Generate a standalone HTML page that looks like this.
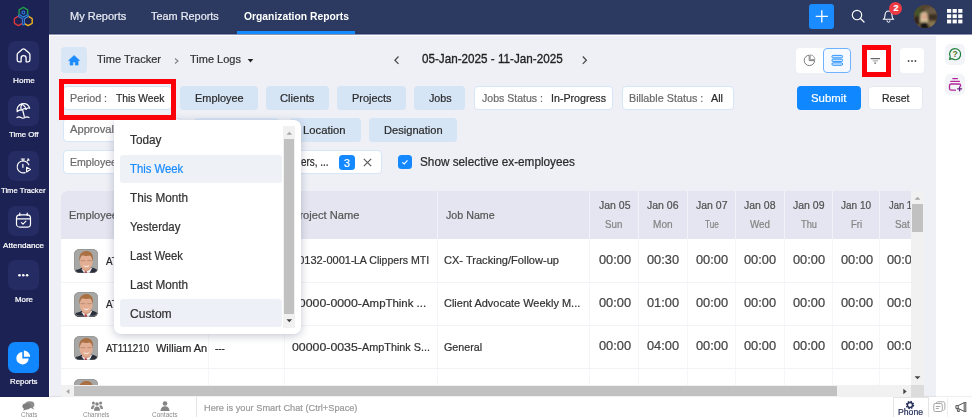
<!DOCTYPE html>
<html lang="en"><head>
<meta charset="utf-8">
<title>Organization Reports - Time Logs</title>
<style>
*{box-sizing:border-box;margin:0;padding:0}
html,body{width:972px;height:417px;overflow:hidden;background:#eef0f6}
body{font-family:"Liberation Sans",sans-serif;font-size:12px;color:#222;position:relative}
.abs{position:absolute}
.fx{position:absolute;white-space:nowrap;line-height:1;transform-origin:0 50%;display:block;-webkit-text-stroke:.22px currentColor}
#side{position:absolute;left:0;top:0;width:49px;height:397px;background:#1c2254}
.sb{position:absolute;left:8px;width:31px;height:30px;border-radius:7px;background:#252b63}
.sb svg{position:absolute;left:0;top:0}
#top{position:absolute;left:49px;top:0;width:923px;height:34px;background:#2c3961}
#rail{position:absolute;left:936.200px;top:35px;width:35.800px;height:363px;background:#fff}
.rb{position:absolute;left:8.600px;width:20px;height:21px;border-radius:5px;background:#f3f4f7}
#bot{position:absolute;left:0;top:396.700px;width:972px;height:20.300px;background:#fff;box-shadow:0 -1px 1px rgba(0,0,0,.06)}
.chip{position:absolute;height:24px;border-radius:3.500px;background:#d6e5f6}
.fld{position:absolute;height:24.400px;border-radius:4px;background:#fff;border:1px solid #d6e6f9}
#tbl{position:absolute;left:61px;top:191px;width:850px;height:194px;background:#fff;border-top-left-radius:6px;overflow:hidden}
#th{position:absolute;left:0;top:0;width:850px;height:48px;background:#e5e5f1}
.vs{position:absolute;top:0;width:1px;height:48px;background:#f1f2f8}
.vr{position:absolute;top:48px;width:1px;height:150px;background:#f5f6f9}
.hr{position:absolute;left:0;width:850px;height:1px;background:#f2f3f6}
.av{position:absolute;left:12.500px;width:24.500px;height:24.500px;border-radius:5.500px;overflow:hidden;background:#a4a4a3}
#dd{position:absolute;left:114px;top:119.5px;width:187px;height:214px;background:#fff;border-radius:0 7px 7px 7px;box-shadow:0 2px 9px rgba(40,50,90,.27)}
.it{position:absolute;left:6.300px;width:161.800px;height:28px;border-radius:3px;background:#eef0f7}
</style>
</head>
<body>

<!-- ============ top bar ============ -->
<div id="top">
  <div class="abs" style="left:0;top:33px;width:923px;height:1px;background:#27315e"></div>
  <div class="abs" style="left:188.200px;top:31.300px;width:117.600px;height:2.900px;background:#148aff"></div>
  <div class="abs" style="left:760px;top:4px;width:25px;height:25px;border-radius:3px;background:#1a8cff">
    <svg width="25" height="25" viewBox="0 0 25 25"><path d="M12.800 6.200v12.200M6.700 12.300h12.200" stroke="#fff" stroke-width="1.300" fill="none"></path></svg>
  </div>
  <svg class="abs" style="left:799px;top:6px" width="20" height="20" viewBox="0 0 20 20"><circle cx="9" cy="9" r="4.700" fill="none" stroke="#fff" stroke-width="1.150"></circle><path d="M12.500 12.500l3.500 3.500" stroke="#fff" stroke-width="1.300" stroke-linecap="round"></path></svg>
  <svg class="abs" style="left:830px;top:7px" width="20" height="20" viewBox="0 0 20 20"><path d="M4.300 12.200c1.200-.7 1.700-1.900 1.700-3.700 0-2.700 1.500-4.500 3.500-4.500s3.500 1.800 3.500 4.500c0 1.800.5 3 1.700 3.700z" fill="none" stroke="#fff" stroke-width="1.100" stroke-linejoin="round"></path><path d="M8.100 13.300v.6a1.400 1.400 0 0 0 2.800 0v-.6" fill="none" stroke="#fff" stroke-width="1"></path></svg>
  <div class="abs" style="left:840.200px;top:2.300px;width:12.500px;height:12.500px;border-radius:7px;background:#ee3a43"></div>
  <span class="fx" style="left:844.400px;top:4.300px;font-size:9px;color:#fff;font-weight:bold">2</span>
  <div class="abs" style="left:864.500px;top:4.500px;width:23.600px;height:23.600px;border-radius:12px;overflow:hidden;background:#4e4231">
    <svg width="24" height="24" viewBox="0 0 24 24" style="display:block"><g filter="url(#ab)"><rect x="-2" y="-2" width="28" height="28" fill="#54452f"></rect><ellipse cx="4" cy="7" rx="4" ry="5" fill="#465229"></ellipse><ellipse cx="17" cy="6" rx="7" ry="3.500" fill="#6b5a44"></ellipse><ellipse cx="19" cy="12" rx="5" ry="3" fill="#3a2e24"></ellipse><ellipse cx="18" cy="19" rx="6" ry="3" fill="#86764f"></ellipse><ellipse cx="3" cy="16" rx="3.500" ry="5" fill="#30281e"></ellipse><ellipse cx="5" cy="22" rx="4" ry="2.500" fill="#7a6c45"></ellipse><path d="M6.500 10.500c0-5 7-5 7 0l.6 7h-8z" fill="#d6c198"></path><ellipse cx="10.400" cy="11.600" rx="2.300" ry="2.800" fill="#dba48c"></ellipse><path d="M6 24c-.5-5 2-7 4.500-7s4.500 2 4 7z" fill="#141416"></path><ellipse cx="8.500" cy="6.300" rx="2.500" ry="1" fill="#2c241c"></ellipse></g></svg>
  </div>
  <svg class="abs" style="left:898.300px;top:9.200px" width="16" height="15" viewBox="0 0 16 15" fill="#fff"><rect x="0" y="0" width="4.200" height="3.800"></rect><rect x="5.600" y="0" width="4.200" height="3.800"></rect><rect x="11.200" y="0" width="4.200" height="3.800"></rect><rect x="0" y="5.300" width="4.200" height="3.800"></rect><rect x="5.600" y="5.300" width="4.200" height="3.800"></rect><rect x="11.200" y="5.300" width="4.200" height="3.800"></rect><rect x="0" y="10.600" width="4.200" height="3.800"></rect><rect x="5.600" y="10.600" width="4.200" height="3.800"></rect><rect x="11.200" y="10.600" width="4.200" height="3.800"></rect></svg>
</div>
<span class="fx" style="left: 70.4px; top: 9.9px; font-size: 11.62px; color: rgb(232, 235, 244); transform: scaleX(0.948);">My Reports</span>
<span class="fx" style="left: 151px; top: 9.9px; font-size: 11.62px; color: rgb(232, 235, 244); transform: scaleX(0.938);">Team Reports</span>
<span class="fx" style="left: 243.5px; top: 9.9px; font-size: 11.62px; color: rgb(255, 255, 255); font-weight: bold; -webkit-text-stroke-width: 0px; transform: scaleX(0.889);">Organization Reports</span>

<!-- ============ sidebar ============ -->
<div id="side">
  <svg class="abs" style="left:11px;top:4.800px" width="25" height="25" viewBox="0 0 25 25" fill="none" stroke-width="1.400" stroke-linejoin="round">
    <path d="M12.40 2.43L16.70 4.92L16.70 9.88L12.40 12.37L8.10 9.88L8.10 4.92z" stroke="#1f9d48"></path>
    <path d="M7.50 11.17L11.60 13.53L11.60 18.27L7.50 20.63L3.40 18.27L3.40 13.53z" stroke="#de3636"></path>
    <path d="M17.10 11.17L21.20 13.53L21.20 18.27L17.10 20.63L13.00 18.27L13.00 13.53z" stroke="#efb21d"></path>
    <path d="M8.400 10.800l4 2.500 4-2.500M12.400 13.300v5.600" stroke="#2b7fe2" stroke-width="3" stroke-linecap="round"></path>
    <path d="M8.400 10.800l4 2.500 4-2.500M12.400 13.300v5.600" stroke="#1f2a63" stroke-width=".9" stroke-linecap="round"></path>
    <circle cx="12.400" cy="7.500" r="1.500" stroke="#2b7fe2" stroke-width="1.100"></circle>
  </svg>
  <div class="sb" style="top:41px"><svg width="31" height="30" viewBox="0 0 31 30" fill="none" stroke="#fff" stroke-width="1.300" stroke-linejoin="round" stroke-linecap="round"><path d="M9.200 13.600c0-.7.300-1.200.8-1.600l4.400-3.700c.7-.6 1.600-.6 2.300 0l4.400 3.700c.5.400.8.900.8 1.600v5.400c0 1-.8 1.800-1.800 1.800h-2v-3.600c0-1.400-1.100-2.500-2.500-2.500s-2.500 1.100-2.500 2.500v3.600h-2.100c-1 0-1.800-.8-1.800-1.800z"></path></svg></div>
  <div class="sb" style="top:95.500px"><svg width="31" height="30" viewBox="0 0 31 30" fill="none" stroke="#fff" stroke-width="1.200" stroke-linejoin="round" stroke-linecap="round"><path d="M9.200 15.700c-1-3.600 1.300-7 4.700-7.800 3.500-.8 6.600 1 7.800 4.300-1.400-.4-2.800 0-3.500 1-1.300-.7-3-.4-4 .8-1.600-.4-3.600.2-5 1.700z"></path><path d="M13.900 7.900c-1 1.800-1.300 3.900-.7 6.100M13.900 7.900c1.900 1.100 3.400 2.900 4.300 5.300M14.800 14.500l1.500 6"></path><path d="M9 21.500c1.400-.9 2.600-.9 4 0s2.600.9 4 0 2.600-.9 4 0"></path></svg></div>
  <div class="sb" style="top:150.500px"><svg width="31" height="30" viewBox="0 0 31 30" fill="none" stroke="#fff" stroke-width="1.200" stroke-linejoin="round" stroke-linecap="round"><path d="M20.800 13.800a6 6 0 1 0-3.700 7.800"></path><path d="M13.300 8h3.200M14.900 8v1.800M19.300 9.800l1.300-1.300M19.900 8l1.200 1.200M14.900 13.300v3"></path><path d="M18.600 16.300l3.800 2.300-3.800 2.300z"></path></svg></div>
  <div class="sb" style="top:205.500px"><svg width="31" height="30" viewBox="0 0 31 30" fill="none" stroke="#fff" stroke-width="1.200" stroke-linejoin="round" stroke-linecap="round"><rect x="8.500" y="8.800" width="14" height="12.300" rx="3.200"></rect><path d="M8.500 12.800h14M11.800 7v2.400M19.200 7v2.400M13.400 16.600l1.600 1.500 2.900-2.900"></path></svg></div>
  <div class="sb" style="top:260px"><svg width="31" height="30" viewBox="0 0 31 30" fill="#fff"><circle cx="11.500" cy="15.300" r="1.300"></circle><circle cx="15.300" cy="15.300" r="1.300"></circle><circle cx="19.100" cy="15.300" r="1.300"></circle></svg></div>
  <div class="sb" style="top:342px;height:31px;background:#1087ff"><svg width="31" height="31" viewBox="0 0 31 31" fill="#fff"><path d="M14.300 10a6.200 6.200 0 1 0 6.400 6.400h-6.400z"></path><path d="M15.900 8.600a6.200 6.200 0 0 1 6.200 6.200h-6.200z"></path></svg></div>
</div>
<span class="fx" style="left: 12.8px; top: 76.6px; font-size: 7.91px; color: rgb(255, 255, 255); transform: scaleX(1.029);">Home</span>
<span class="fx" style="left: 8.9px; top: 131px; font-size: 7.91px; color: rgb(255, 255, 255); transform: scaleX(0.987);">Time Off</span>
<span class="fx" style="left: 1.2px; top: 186.8px; font-size: 7.91px; color: rgb(255, 255, 255); transform: scaleX(0.971);">Time Tracker</span>
<span class="fx" style="left: 3px; top: 241.5px; font-size: 7.91px; color: rgb(255, 255, 255); transform: scaleX(1.025);">Attendance</span>
<span class="fx" style="left: 14.5px; top: 296.1px; font-size: 7.91px; color: rgb(255, 255, 255); transform: scaleX(0.999);">More</span>
<span class="fx" style="left: 9.7px; top: 378.1px; font-size: 7.91px; color: rgb(255, 255, 255); transform: scaleX(0.993);">Reports</span>

<!-- ============ right rail ============ -->
<div id="rail">
  <div class="rb" style="top:9px"><svg width="20" height="21" viewBox="0 0 20 21" fill="none" stroke="#1d7f3b" stroke-width="1.200"><path d="M10.200 4.700a5.500 5.500 0 1 1-3.300 9.900l-2.400.7.800-2.300a5.500 5.500 0 0 1 4.900-8.300z" stroke-linejoin="round"></path><text x="10.200" y="13.100" font-family="Liberation Sans, sans-serif" font-size="8.500" font-weight="bold" text-anchor="middle" fill="#4f7a24" stroke="none">?</text></svg></div>
  <div class="rb" style="top:39px"><svg width="20" height="21" viewBox="0 0 20 21" fill="none" stroke="#b3259a" stroke-width="1.300" stroke-linecap="round"><path d="M7.800 4.600h4.600M5.800 7.400h8.600M10.500 16.200h-4.200a1.800 1.800 0 0 1-1.800-1.800v-2.600a1.800 1.800 0 0 1 1.800-1.800h7.600a1.800 1.800 0 0 1 1.800 1.800v.4"></path><path d="M14.600 12.800v4M12.600 14.800h4" stroke="#6d1f86"></path></svg></div>
</div>

<!-- ============ bottom bar ============ -->
<div id="bot">
  <svg class="abs" style="left:22px;top:4px" width="13" height="10" viewBox="0 0 13 10" fill="#8d8d8d"><ellipse cx="7.800" cy="3.700" rx="4.600" ry="3.400"></ellipse><path d="M10.500 5.500l1.700 3-3.800-1.800z"></path><ellipse cx="4.600" cy="5.300" rx="4.200" ry="3.100" fill="#7e7e7e"></ellipse><path d="M2.200 7.200l-1 2.600 3.500-1.500z" fill="#7e7e7e"></path></svg>
  <svg class="abs" style="left:91px;top:4px" width="12" height="10" viewBox="0 0 12 10" fill="#858585"><circle cx="6" cy="3" r="1.800"></circle><path d="M3 9.800c0-2.800 1.200-4.300 3-4.300s3 1.500 3 4.300z"></path><circle cx="2.400" cy="2" r="1.500"></circle><path d="M0 8c0-2.400 1-3.800 2.400-3.800.6 0 1.100.2 1.500.6-.9.800-1.400 2-1.500 3.200z"></path><circle cx="9.600" cy="2" r="1.500"></circle><path d="M12 8c0-2.400-1-3.800-2.400-3.800-.6 0-1.100.2-1.500.6.900.8 1.400 2 1.500 3.200z"></path></svg>
  <svg class="abs" style="left:160px;top:4px" width="10" height="10" viewBox="0 0 10 10" fill="#858585"><circle cx="5" cy="2.500" r="2.300"></circle><path d="M.5 10c0-3.300 1.800-4.800 4.500-4.800s4.500 1.500 4.500 4.800z"></path></svg>
  <div class="abs" style="left:196px;top:0;width:1px;height:20px;background:#e4e4e4"></div>
  <div class="abs" style="left:892.800px;top:0;width:35.800px;height:20px;border:1px solid #e4e4e4;border-bottom:none"></div>
  <div class="abs" style="left:947.200px;top:1px;width:1px;height:19px;background:#efefef"></div>
  <svg class="abs" style="left:905px;top:3px" width="10" height="10" viewBox="0 0 10 10"><circle cx="5" cy="5" r="3.400" fill="none" stroke="#27305a" stroke-width="1.600" stroke-dasharray="1.500 1.170"></circle><circle cx="5" cy="5" r="2.500" fill="none" stroke="#27305a" stroke-width="1.400"></circle></svg>
  <svg class="abs" style="left:933px;top:4px" width="13" height="12" viewBox="0 0 13 12" fill="none" stroke="#9c9c9c" stroke-width=".9"><rect x=".8" y="2.500" width="8.500" height="8" rx="1.500"></rect><path d="M3 2.500c.3-1.200 1-1.700 2-1.700h5.200c1 0 1.700.7 1.700 1.700v5c0 1-.6 1.600-1.600 1.800M2.800 5.500h4.500M2.800 7.500h3"></path></svg>
  <svg class="abs" style="left:954.500px;top:4.500px" width="13" height="13" viewBox="0 0 13 13" fill="none" stroke="#4a4a4a" stroke-width=".95" stroke-linejoin="round"><path d="M.9 4.600h2.300l6-3v8.800l-6-3h-2.300zM3.200 4.600v2.800M10.800 1v10M9.200 1.600c.8 0 1.600 0 1.600-.6M9.200 10.400c.8 0 1.600 0 1.600.6M2 7.600l.7 2.900h1.700l-.6-2.600"></path></svg>
</div>
<span class="fx" style="left: 20.6px; top: 411.1px; font-size: 7.63px; color: rgb(138, 138, 138); -webkit-text-stroke-width: 0px; transform: scaleX(0.823);">Chats</span>
<span class="fx" style="left: 83.3px; top: 411.1px; font-size: 7.63px; color: rgb(138, 138, 138); -webkit-text-stroke-width: 0px; transform: scaleX(0.819);">Channels</span>
<span class="fx" style="left: 151.9px; top: 411.1px; font-size: 7.63px; color: rgb(138, 138, 138); -webkit-text-stroke-width: 0px; transform: scaleX(0.847);">Contacts</span>
<span class="fx" style="left: 204px; top: 402.9px; font-size: 9.77px; color: rgb(154, 154, 154); transform: scaleX(0.944);">Here is your Smart Chat (Ctrl+Space)</span>
<span class="fx" style="left: 897.6px; top: 408px; font-size: 8.84px; color: rgb(39, 48, 90); transform: scaleX(0.979);">Phone</span>

<!-- content frame highlight -->
<div class="abs" style="left:49px;top:34px;width:923px;height:1px;background:#8e94b3"></div>
<div class="abs" style="left:49px;top:35px;width:887.200px;height:1px;background:#fdfdff"></div>
<div class="abs" style="left:49px;top:35px;width:1.400px;height:362px;background:#fbfcfe"></div>

<!-- ============ breadcrumb row ============ -->
<div class="abs" style="left:61.300px;top:46.800px;width:25.900px;height:26.700px;border-radius:4px;background:#d8e6f6">
  <svg width="26" height="26" viewBox="0 0 26 26"><path d="M13.100 8.500l-5.500 5h1.500v4.600h2.800v-3.100h2.400v3.100h2.800v-4.600h1.500z" fill="#1a8cff" stroke="#1a8cff" stroke-width=".6" stroke-linejoin="round"></path></svg>
</div>
<svg class="abs" style="left:172px;top:54.500px" width="8" height="11" viewBox="0 0 8 11"><path d="M3 3.500l3 2.500-3 2.500" fill="none" stroke="#808080" stroke-width="1.100"></path></svg>
<svg class="abs" style="left:245.500px;top:58px" width="9" height="6" viewBox="0 0 9 6"><path d="M1.700 1h5.600l-2.800 3.600z" fill="#222"></path></svg>
<svg class="abs" style="left:392px;top:54px" width="10" height="12" viewBox="0 0 10 12"><path d="M6.500 2.500l-3.600 3.700 3.600 3.700" fill="none" stroke="#4a4a4a" stroke-width="1.250"></path></svg>
<svg class="abs" style="left:580px;top:54px" width="10" height="12" viewBox="0 0 10 12"><path d="M2.800 2.500l3.600 3.700-3.600 3.700" fill="none" stroke="#4a4a4a" stroke-width="1.250"></path></svg>
<span class="fx" style="left: 97px; top: 53.4px; font-size: 11.62px; color: rgb(51, 51, 51); transform: scaleX(0.951);">Time Tracker</span>
<span class="fx" style="left: 190px; top: 53.4px; font-size: 11.62px; color: rgb(51, 51, 51); transform: scaleX(0.948);">Time Logs</span>
<span class="fx" style="left: 422px; top: 52.2px; font-size: 13.3px; color: rgb(34, 34, 34); -webkit-text-stroke-width: 0.35px; transform: scaleX(0.878);">05-Jan-2025 - 11-Jan-2025</span>

<!-- view toggle / filter / more -->
<div class="abs" style="left:795.500px;top:48.300px;width:55px;height:24.500px;border-radius:4px;background:#fff"></div>
<svg class="abs" style="left:802px;top:53px" width="15" height="15" viewBox="0 0 15 15" fill="none" stroke="#7a7a7a" stroke-width="1"><path d="M7.200 2.200a5.200 5.200 0 1 0 5.400 5.400h-5.400z"></path><path d="M8.300 1.900a4.700 4.700 0 0 1 4.600 4.600h-4.600z" stroke="#8a8a8a" stroke-width=".8"></path></svg>
<div class="abs" style="left:823px;top:48.300px;width:27.500px;height:24.500px;border-radius:4px;background:#f6faff;border:1px solid #6fb3ff"></div>
<svg class="abs" style="left:829px;top:53px" width="16" height="15" viewBox="0 0 16 15" fill="#cfe5ff" stroke="#1a8cff" stroke-width=".9"><rect x="2.900" y="2.400" width="10.700" height="2.500" rx="1.250"></rect><rect x="2.900" y="6.100" width="10.700" height="2.500" rx="1.250"></rect><rect x="2.900" y="9.800" width="10.700" height="2.500" rx="1.250"></rect></svg>
<div class="abs" style="left:862px;top:45px;width:29px;height:32px;background:#fff;border:5px solid #fb0008;border-left-width:5.500px;border-right-width:5.500px"></div>
<svg class="abs" style="left:869px;top:55px" width="15" height="12" viewBox="0 0 15 12" stroke-width="1" stroke-linecap="butt"><path d="M1.700 3.700h9.300" stroke="#444"></path><path d="M3.800 5.900h5.100" stroke="#9a9a9a"></path><path d="M5.300 8.100h1.800" stroke="#444"></path></svg>
<div class="abs" style="left:899.500px;top:48.300px;width:24.500px;height:24.500px;border-radius:4px;background:#fff"></div>
<svg class="abs" style="left:906px;top:59px" width="12" height="4" viewBox="0 0 12 4" fill="#444"><circle cx="2.600" cy="2" r=".9"></circle><circle cx="6" cy="2" r=".9"></circle><circle cx="9.400" cy="2" r=".9"></circle></svg>

<!-- ============ filter row 1 ============ -->
<div class="fld" style="left:63px;top:85.800px;width:109px;border-color:#cfe2f8"></div>
<div class="chip" style="left:180px;top:86px;width:77.500px"></div>
<div class="chip" style="left:266px;top:86px;width:62.500px"></div>
<div class="chip" style="left:337px;top:86px;width:68.500px"></div>
<div class="chip" style="left:414px;top:86px;width:51px"></div>
<div class="fld" style="left:473.500px;top:85.800px;width:139px"></div>
<div class="fld" style="left:621.500px;top:85.800px;width:112.500px"></div>
<div class="abs" style="left:796.700px;top:85.800px;width:64.300px;height:24.600px;border-radius:4px;background:#0f87ff"></div>
<div class="abs" style="left:868.400px;top:85.800px;width:55px;height:24.600px;border-radius:4px;background:#fff;border:1px solid #e6e9f0"></div>

<!-- ============ filter row 2 ============ -->
<div class="fld" style="left:63px;top:117.500px;width:119px;height:24.500px"></div>
<div class="chip" style="left:193.500px;top:117.500px;width:85px"></div>
<div class="chip" style="left:290px;top:117.800px;width:70.500px"></div>
<div class="chip" style="left:369px;top:117.800px;width:88px"></div>

<!-- ============ filter row 3 ============ -->
<div class="fld" style="left:62.600px;top:149.800px;width:319.600px"></div>
<div class="abs" style="left:339px;top:155px;width:15.600px;height:15.200px;border-radius:3.500px;background:#1488ff"></div>
<svg class="abs" style="left:361.500px;top:157px" width="11" height="11" viewBox="0 0 11 11"><path d="M1.800 1.800l7.400 7.400M9.200 1.800l-7.400 7.400" stroke="#5a5a5a" stroke-width="1.200"></path></svg>
<div class="abs" style="left:397.900px;top:155.300px;width:14.200px;height:14px;border-radius:3.500px;background:#1488ff">
  <svg width="14" height="14" viewBox="0 0 14 14"><path d="M4.300 7.300l1.900 1.600 3.300-3.500" fill="none" stroke="#fff" stroke-width="1.100"></path></svg>
</div>
<span class="fx" style="left: 69.8px; top: 92.6px; font-size: 11.16px; color: rgb(106, 106, 106); transform: scaleX(0.965);">Period :</span>
<span class="fx" style="left: 115.5px; top: 92.6px; font-size: 11.16px; color: rgb(42, 42, 42); transform: scaleX(0.922);">This Week</span>
<span class="fx" style="left: 194.5px; top: 92.4px; font-size: 11.62px; color: rgb(42, 42, 42); transform: scaleX(0.941);">Employee</span>
<span class="fx" style="left: 280.4px; top: 92.4px; font-size: 11.62px; color: rgb(42, 42, 42); transform: scaleX(0.969);">Clients</span>
<span class="fx" style="left: 351.8px; top: 92.4px; font-size: 11.62px; color: rgb(42, 42, 42); transform: scaleX(0.942);">Projects</span>
<span class="fx" style="left: 428.6px; top: 92.4px; font-size: 11.62px; color: rgb(42, 42, 42); transform: scaleX(0.925);">Jobs</span>
<span class="fx" style="left: 481.7px; top: 92.6px; font-size: 11.16px; color: rgb(106, 106, 106); transform: scaleX(0.946);">Jobs Status :</span>
<span class="fx" style="left: 550.6px; top: 92.6px; font-size: 11.16px; color: rgb(42, 42, 42); transform: scaleX(0.954);">In-Progress</span>
<span class="fx" style="left: 629.2px; top: 92.6px; font-size: 11.16px; color: rgb(106, 106, 106); transform: scaleX(0.966);">Billable Status :</span>
<span class="fx" style="left: 711.3px; top: 92.6px; font-size: 11.16px; color: rgb(42, 42, 42); transform: scaleX(0.967);">All</span>
<span class="fx" style="left: 811.3px; top: 92.4px; font-size: 11.62px; color: rgb(255, 255, 255); transform: scaleX(0.98);">Submit</span>
<span class="fx" style="left: 882px; top: 92.4px; font-size: 11.62px; color: rgb(42, 42, 42); transform: scaleX(0.903);">Reset</span>
<span class="fx" style="left: 69.8px; top: 124.2px; font-size: 11.16px; color: rgb(106, 106, 106); transform: scaleX(0.999);">Approval</span>
<span class="fx" style="left: 303.2px; top: 124px; font-size: 11.62px; color: rgb(42, 42, 42); transform: scaleX(0.97);">Location</span>
<span class="fx" style="left: 383.8px; top: 124px; font-size: 11.62px; color: rgb(42, 42, 42); transform: scaleX(0.956);">Designation</span>
<span class="fx" style="left: 69.8px; top: 156.7px; font-size: 11.16px; color: rgb(106, 106, 106); transform: scaleX(0.947);">Employee</span>
<span class="fx" style="left: 301.3px; top: 156.3px; font-size: 12.09px; color: rgb(42, 42, 42); transform: scaleX(0.819);">ers, ...</span>
<span class="fx" style="left: 344.2px; top: 157.6px; font-size: 10.7px; color: rgb(255, 255, 255); transform: scaleX(1.008);">3</span>
<span class="fx" style="left: 419.7px; top: 156.4px; font-size: 12.09px; color: rgb(42, 42, 42); transform: scaleX(0.974);">Show selective ex-employees</span>

<!-- ============ table ============ -->
<div id="tbl">
  <div id="th"></div>
  <div class="vs" style="left:147px"></div><div class="vs" style="left:223px"></div><div class="vs" style="left:376px"></div>
  <div class="vs" style="left:528px"></div><div class="vs" style="left:577px"></div><div class="vs" style="left:626px"></div><div class="vs" style="left:674.200px"></div><div class="vs" style="left:722.500px"></div><div class="vs" style="left:771.400px"></div><div class="vs" style="left:818.200px"></div>
  <div class="vr" style="left:147px"></div><div class="vr" style="left:223px"></div><div class="vr" style="left:376px"></div>
  <div class="vr" style="left:528px"></div><div class="vr" style="left:577px"></div><div class="vr" style="left:626px"></div><div class="vr" style="left:674.200px"></div><div class="vr" style="left:722.500px"></div><div class="vr" style="left:771.400px"></div><div class="vr" style="left:818.200px"></div>
  <div class="hr" style="top:90.700px"></div><div class="hr" style="top:133.900px"></div><div class="hr" style="top:177.400px"></div>
  <div class="av" style="top:57.900px"><svg width="24.500" height="24.500" viewBox="0 0 25 25" style="display:block"><use href="#face"></use></svg></div>
  <div class="av" style="top:101.300px"><svg width="24.500" height="24.500" viewBox="0 0 25 25" style="display:block"><use href="#face"></use></svg></div>
  <div class="av" style="top:144.600px"><svg width="24.500" height="24.500" viewBox="0 0 25 25" style="display:block"><use href="#face"></use></svg></div>
  <div class="av" style="top:187.600px"><svg width="24.500" height="24.500" viewBox="0 0 25 25" style="display:block"><use href="#face"></use></svg></div>
  <div class="abs" style="left:94.900px;top:149.900px;width:52px;height:13px;overflow:hidden"><span class="fx" style="left: 0px; top: 0.7px; font-size: 11.62px; color: rgb(38, 38, 38); transform: scaleX(0.945);">William An</span></div>
</div>
<div class="abs" style="left:61px;top:191px;width:850px;height:194px;overflow:hidden;pointer-events:none"><div class="abs" style="left:-61px;top:-191px;width:972px;height:417px">
<span class="fx" style="left: 69px; top: 209px; font-size: 11.62px; color: rgb(85, 85, 85); transform: scaleX(0.949);">Employee</span>
<span class="fx" style="left: 291.6px; top: 209px; font-size: 11.62px; color: rgb(85, 85, 85); transform: scaleX(0.958);">Project Name</span>
<span class="fx" style="left: 445.5px; top: 209px; font-size: 11.62px; color: rgb(85, 85, 85); transform: scaleX(0.92);">Job Name</span>
<span class="fx" style="left: 598.5px; top: 199.6px; font-size: 11.16px; color: rgb(80, 80, 80); transform: scaleX(0.94);">Jan 05</span>
<span class="fx" style="left: 605.2px; top: 220.3px; font-size: 10.04px; color: rgb(133, 133, 133); transform: scaleX(0.974);">Sun</span>
<span class="fx" style="left: 647.2px; top: 199.6px; font-size: 11.16px; color: rgb(80, 80, 80); transform: scaleX(0.94);">Jan 06</span>
<span class="fx" style="left: 653px; top: 220.3px; font-size: 10.04px; color: rgb(133, 133, 133); transform: scaleX(1.004);">Mon</span>
<span class="fx" style="left: 695.6px; top: 199.6px; font-size: 11.16px; color: rgb(80, 80, 80); transform: scaleX(0.94);">Jan 07</span>
<span class="fx" style="left: 705.2px; top: 220.3px; font-size: 10.04px; color: rgb(133, 133, 133); transform: scaleX(0.81);">Tue</span>
<span class="fx" style="left: 744px; top: 199.6px; font-size: 11.16px; color: rgb(80, 80, 80); transform: scaleX(0.94);">Jan 08</span>
<span class="fx" style="left: 749.6px; top: 220.3px; font-size: 10.04px; color: rgb(133, 133, 133); transform: scaleX(0.978);">Wed</span>
<span class="fx" style="left: 792.8px; top: 199.6px; font-size: 11.16px; color: rgb(80, 80, 80); transform: scaleX(0.94);">Jan 09</span>
<span class="fx" style="left: 801.1px; top: 220.3px; font-size: 10.04px; color: rgb(133, 133, 133); transform: scaleX(0.919);">Thu</span>
<span class="fx" style="left: 841px; top: 199.6px; font-size: 11.16px; color: rgb(80, 80, 80); transform: scaleX(0.896);">Jan 10</span>
<span class="fx" style="left: 851.1px; top: 220.3px; font-size: 10.04px; color: rgb(133, 133, 133); transform: scaleX(0.948);">Fri</span>
<span class="fx" style="left: 888.9px; top: 199.6px; font-size: 11.16px; color: rgb(80, 80, 80); transform: scaleX(0.845);">Jan 11</span>
<span class="fx" style="left: 895.1px; top: 220.3px; font-size: 10.04px; color: rgb(133, 133, 133); transform: scaleX(0.983);">Sat</span>
<span class="fx" style="left: 598.5px; top: 253.7px; font-size: 12px; color: rgb(68, 68, 68); transform: scaleX(1.066);">00:00</span>
<span class="fx" style="left: 647.4px; top: 253.7px; font-size: 12px; color: rgb(68, 68, 68); transform: scaleX(1.066);">00:30</span>
<span class="fx" style="left: 695.6px; top: 253.7px; font-size: 12px; color: rgb(68, 68, 68); transform: scaleX(1.066);">00:00</span>
<span class="fx" style="left: 744px; top: 253.7px; font-size: 12px; color: rgb(68, 68, 68); transform: scaleX(1.066);">00:00</span>
<span class="fx" style="left: 793px; top: 253.7px; font-size: 12px; color: rgb(68, 68, 68); transform: scaleX(1.066);">00:00</span>
<span class="fx" style="left: 840.7px; top: 253.7px; font-size: 12px; color: rgb(68, 68, 68); transform: scaleX(1.066);">00:00</span>
<span class="fx" style="left: 886.7px; top: 253.7px; font-size: 12px; color: rgb(68, 68, 68); transform: scaleX(1.066);">00:00</span>
<span class="fx" style="left: 598.5px; top: 296.9px; font-size: 12px; color: rgb(68, 68, 68); transform: scaleX(1.066);">00:00</span>
<span class="fx" style="left: 647.4px; top: 296.9px; font-size: 12px; color: rgb(68, 68, 68); transform: scaleX(1.066);">01:00</span>
<span class="fx" style="left: 695.6px; top: 296.9px; font-size: 12px; color: rgb(68, 68, 68); transform: scaleX(1.066);">00:00</span>
<span class="fx" style="left: 744px; top: 296.9px; font-size: 12px; color: rgb(68, 68, 68); transform: scaleX(1.066);">00:00</span>
<span class="fx" style="left: 793px; top: 296.9px; font-size: 12px; color: rgb(68, 68, 68); transform: scaleX(1.066);">00:00</span>
<span class="fx" style="left: 840.7px; top: 296.9px; font-size: 12px; color: rgb(68, 68, 68); transform: scaleX(1.066);">00:00</span>
<span class="fx" style="left: 886.7px; top: 296.9px; font-size: 12px; color: rgb(68, 68, 68); transform: scaleX(1.066);">00:00</span>
<span class="fx" style="left: 598.5px; top: 340.2px; font-size: 12px; color: rgb(68, 68, 68); transform: scaleX(1.066);">00:00</span>
<span class="fx" style="left: 647.4px; top: 340.2px; font-size: 12px; color: rgb(68, 68, 68); transform: scaleX(1.066);">04:00</span>
<span class="fx" style="left: 695.6px; top: 340.2px; font-size: 12px; color: rgb(68, 68, 68); transform: scaleX(1.066);">00:00</span>
<span class="fx" style="left: 744px; top: 340.2px; font-size: 12px; color: rgb(68, 68, 68); transform: scaleX(1.066);">00:00</span>
<span class="fx" style="left: 793px; top: 340.2px; font-size: 12px; color: rgb(68, 68, 68); transform: scaleX(1.066);">00:00</span>
<span class="fx" style="left: 840.7px; top: 340.2px; font-size: 12px; color: rgb(68, 68, 68); transform: scaleX(1.066);">00:00</span>
<span class="fx" style="left: 886.7px; top: 340.2px; font-size: 12px; color: rgb(68, 68, 68); transform: scaleX(1.066);">00:00</span>
<span class="fx" style="left: 106px; top: 255.1px; font-size: 11.62px; color: rgb(38, 38, 38); transform: scaleX(0.847);">AT111208</span>
<span class="fx" style="left: 106px; top: 298.4px; font-size: 11.62px; color: rgb(38, 38, 38); transform: scaleX(0.847);">AT111209</span>
<span class="fx" style="left: 106px; top: 341.6px; font-size: 11.62px; color: rgb(38, 38, 38); transform: scaleX(0.847);">AT111210</span>
<span class="fx" style="left: 214.7px; top: 341.6px; font-size: 11.62px; color: rgb(38, 38, 38); transform: scaleX(0.844);">---</span>
<span class="fx" style="left: 291.6px; top: 254.2px; font-size: 11.62px; color: rgb(51, 51, 51); transform: scaleX(0.951);">10132-0001-</span>
<span class="fx" style="left: 354.4px; top: 254.2px; font-size: 11.62px; color: rgb(51, 51, 51); transform: scaleX(0.909);">LA Clippers MTI</span>
<span class="fx" style="left: 291.6px; top: 297.4px; font-size: 11.62px; color: rgb(51, 51, 51); transform: scaleX(1.062);">00000-0000-</span>
<span class="fx" style="left: 361.8px; top: 297.4px; font-size: 11.62px; color: rgb(51, 51, 51); transform: scaleX(0.984);">AmpThink ...</span>
<span class="fx" style="left: 291.6px; top: 340.7px; font-size: 11.62px; color: rgb(51, 51, 51); transform: scaleX(1.062);">00000-0035-</span>
<span class="fx" style="left: 361.8px; top: 340.7px; font-size: 11.62px; color: rgb(51, 51, 51); transform: scaleX(0.933);">AmpThink S...</span>
<span class="fx" style="left: 444.3px; top: 254.2px; font-size: 11.62px; color: rgb(51, 51, 51); transform: scaleX(0.953);">CX- Tracking/Follow-up</span>
<span class="fx" style="left: 444.3px; top: 297.4px; font-size: 11.62px; color: rgb(51, 51, 51); transform: scaleX(0.944);">Client Advocate Weekly M...</span>
<span class="fx" style="left: 444.3px; top: 340.7px; font-size: 11.62px; color: rgb(51, 51, 51); transform: scaleX(0.925);">General</span>
</div></div>

<!-- table scrollbars -->
<div class="abs" style="left:911px;top:191px;width:13px;height:194px;background:#f1f1f1"></div>
<div class="abs" style="left:912.200px;top:204px;width:10.400px;height:28px;background:#c1c1c1"></div>
<svg class="abs" style="left:913px;top:195px" width="9" height="6" viewBox="0 0 9 6"><path d="M1.600 4.800l2.900-3.100 2.900 3.100z" fill="#a6a6a6"></path></svg>
<svg class="abs" style="left:913px;top:375px" width="9" height="6" viewBox="0 0 9 6"><path d="M1.600 1.200l2.900 3.100 2.900-3.100z" fill="#444"></path></svg>
<div class="abs" style="left:61px;top:385px;width:850px;height:12px;background:#f1f1f1"></div>
<div class="abs" style="left:911px;top:385px;width:13px;height:12px;background:#dcdcdc"></div>
<div class="abs" style="left:74px;top:385.800px;width:763.200px;height:10.200px;background:#c1c1c1"></div>
<svg class="abs" style="left:65px;top:386.500px" width="6" height="9" viewBox="0 0 6 9"><path d="M4.400 2l-3.200 2.500 3.200 2.500z" fill="#a3a3a3"></path></svg>
<svg class="abs" style="left:902px;top:386.500px" width="6" height="9" viewBox="0 0 6 9"><path d="M1.300 1.700l3.400 2.800-3.400 2.800z" fill="#444"></path></svg>

<!-- ============ dropdown ============ -->
<div id="dd">
  <div class="it" style="top:35.300px;background:#eef1f6"></div>
  <div class="it" style="top:179.700px;background:#edf0f6"></div>
  <div class="abs" style="left:168.700px;top:6.600px;width:12px;height:201.500px;background:#f1f1f1"></div>
  <div class="abs" style="left:169.600px;top:19.300px;width:10px;height:175px;background:#c1c1c1"></div>
  <svg class="abs" style="left:170.500px;top:10.100px" width="9" height="6" viewBox="0 0 9 6"><path d="M1.500 4.700l2.800-3 2.800 3z" fill="#a6a6a6"></path></svg>
  <svg class="abs" style="left:170.500px;top:198.100px" width="9" height="6" viewBox="0 0 9 6"><path d="M1.500 1.300l2.800 3 2.800-3z" fill="#404040"></path></svg>
</div>
<span class="fx" style="left: 130.2px; top: 133.5px; font-size: 12.37px; color: rgb(51, 51, 51); transform: scaleX(0.952);">Today</span>
<span class="fx" style="left: 130.2px; top: 162.5px; font-size: 12.37px; color: rgb(26, 140, 255); transform: scaleX(0.916);">This Week</span>
<span class="fx" style="left: 130.2px; top: 191.5px; font-size: 12.37px; color: rgb(51, 51, 51); transform: scaleX(0.949);">This Month</span>
<span class="fx" style="left: 130.2px; top: 220.5px; font-size: 12.37px; color: rgb(51, 51, 51); transform: scaleX(0.925);">Yesterday</span>
<span class="fx" style="left: 130.2px; top: 249.5px; font-size: 12.37px; color: rgb(51, 51, 51); transform: scaleX(0.911);">Last Week</span>
<span class="fx" style="left: 130.2px; top: 278.5px; font-size: 12.37px; color: rgb(51, 51, 51); transform: scaleX(0.948);">Last Month</span>
<span class="fx" style="left: 130.2px; top: 307.5px; font-size: 12.37px; color: rgb(51, 51, 51); transform: scaleX(0.979);">Custom</span>

<!-- annotation box on top -->
<div class="abs" style="left:59px;top:79px;width:117px;height:40.800px;border:5px solid #fb0008;border-left-width:5.500px;border-right-width:5.500px"></div>

<!-- shared avatar face -->
<svg width="0" height="0" style="position:absolute">
  <defs>
    <filter id="ab" x="-20%" y="-20%" width="140%" height="140%"><feGaussianBlur stdDeviation="1.1"></feGaussianBlur></filter>
    <filter id="fb" x="-10%" y="-10%" width="120%" height="120%"><feGaussianBlur stdDeviation=".45"></feGaussianBlur></filter>
    <g id="face">
      <rect width="25" height="25" fill="#a7a7a6"></rect>
      <g filter="url(#fb)">
      <path d="M-1 26c0-3 2-4.500 6.500-5.500l3-1.500h8l3.500.5c3.500 1 5.500 3 6 6.500z" fill="#2a2d3b"></path>
      <path d="M7.500 20.500l4 5.500h3.500l3.500-6.500z" fill="#f3f3f5"></path>
      <path d="M11 22.800h1.900l.6 3h-3z" fill="#b3232b"></path>
      <path d="M8.500 16h8l.3 4.800-4.300 2.200-4.300-2.200z" fill="#d29a7d"></path>
      <ellipse cx="12.400" cy="13" rx="6.600" ry="8.100" fill="#e3ae92"></ellipse>
      <path d="M5.600 12.500c-1.300-7 2.600-10.400 7.200-10.400 4.400 0 7.700 3.400 6.300 10.400-.4-3.300-1.300-5.100-2.800-5.900-2.700.8-5.800.5-8-.3-1.500 1.300-2.300 3.200-2.700 6.200z" fill="#ab6f42"></path>
      <path d="M6.800 11.900h4.600M13.600 11.900h4.600" stroke="#9a7663" stroke-width=".6" fill="none"></path>
      <path d="M9.600 16.600c1.700.9 4.200.9 5.900 0-.5 2.100-5.400 2.100-5.900 0z" fill="#fdf8f4"></path>
      </g>
      <rect x=".4" y=".4" width="24.200" height="24.200" rx="5.500" fill="none" stroke="#939393" stroke-width=".8"></rect>
    </g>
  </defs>
</svg>



</body></html>
